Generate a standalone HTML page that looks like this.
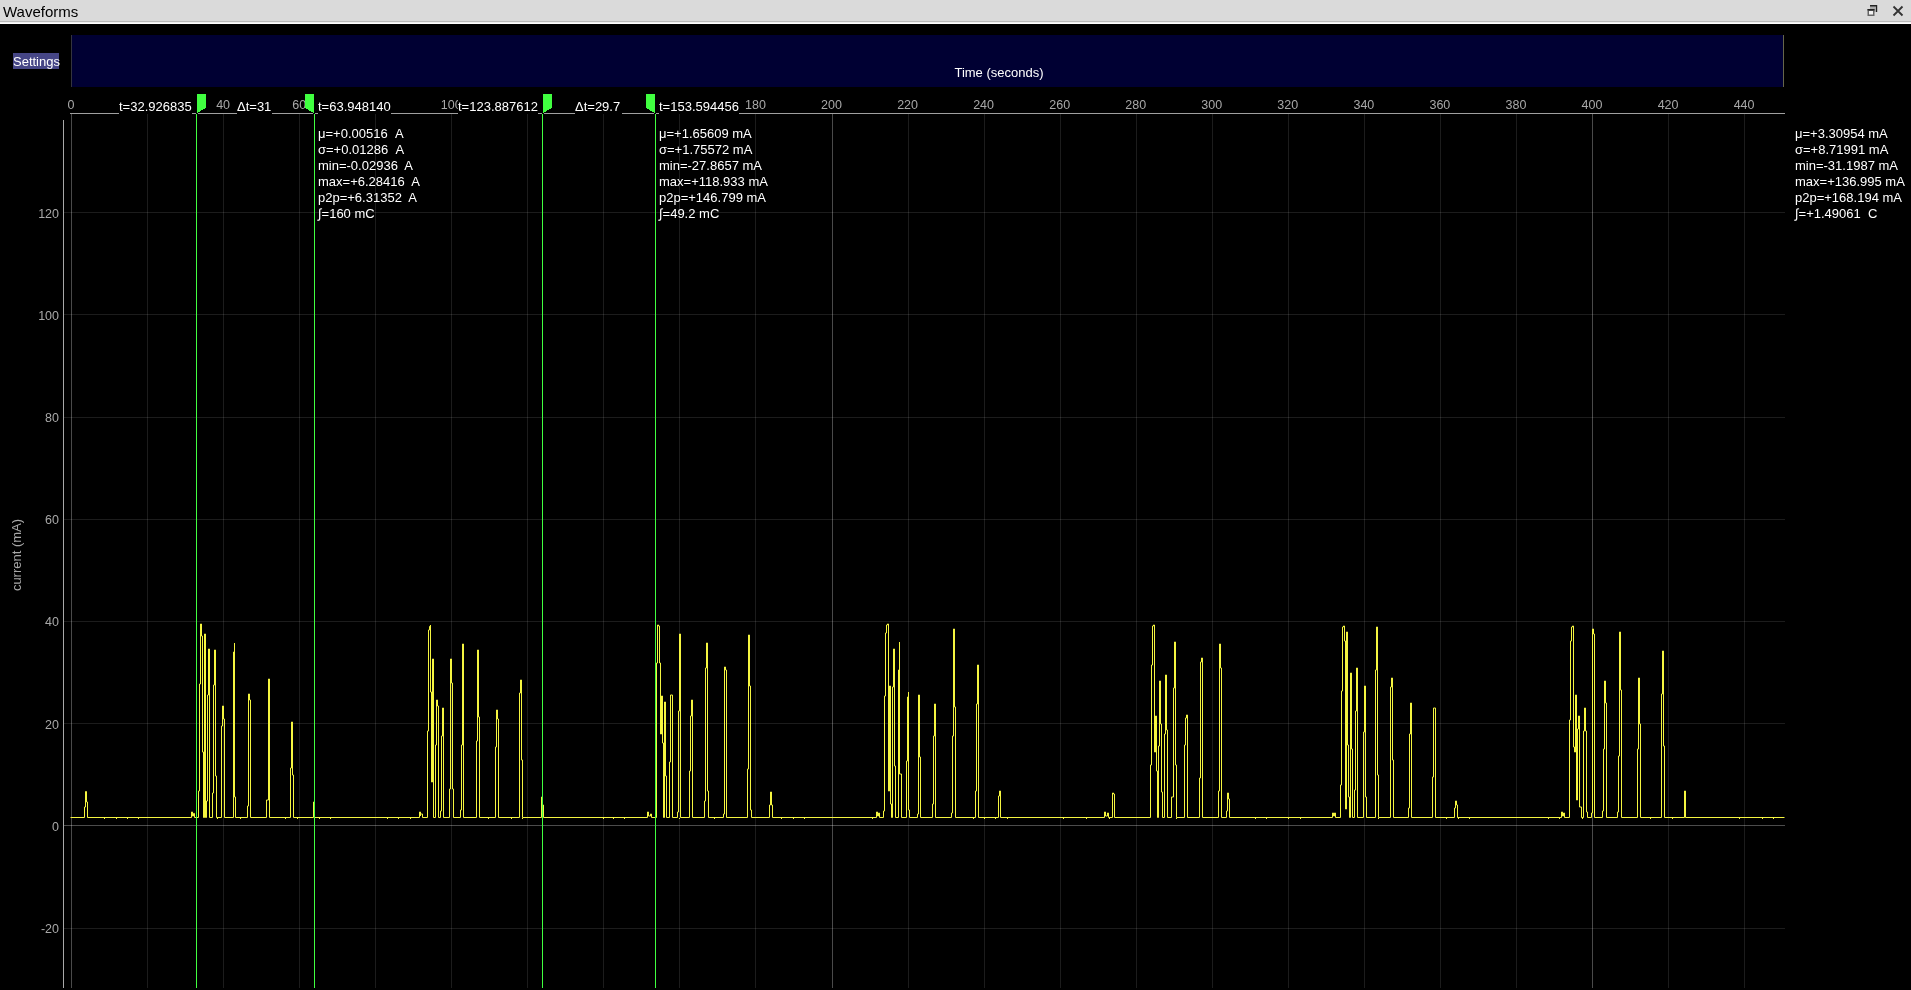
<!DOCTYPE html><html><head><meta charset="utf-8"><style>
html,body{margin:0;padding:0;background:#000;width:1911px;height:990px;overflow:hidden}
svg{position:absolute;left:0;top:0}
text{font-family:"Liberation Sans",sans-serif}
</style></head><body>
<svg width="1911" height="990" viewBox="0 0 1911 990">
<rect x="0" y="0" width="1911" height="21" fill="#dadada"/>
<rect x="0" y="21" width="1911" height="1" fill="#b9b9b9"/>
<rect x="0" y="22" width="1911" height="1" fill="#f0f0f0"/>
<rect x="0" y="23" width="1911" height="1" fill="#ffffff"/>
<text x="3" y="17" font-size="15" fill="#000">Waveforms</text>

<g>
<rect x="1870" y="5" width="7" height="7" fill="#aaa"/>
<rect x="1870" y="5" width="7" height="1.5" fill="#222"/>
<rect x="1876" y="5" width="1.2" height="7" fill="#222"/>
<rect x="1867.5" y="9" width="7" height="7" fill="#666"/>
<rect x="1867.5" y="9" width="7" height="1.5" fill="#222"/>
<rect x="1869" y="11" width="4" height="3.5" fill="#f2f2f2"/>
</g>
<path d="M1893.5 6.5 L1902.5 15.5 M1902.5 6.5 L1893.5 15.5" stroke="#333" stroke-width="1.8" fill="none"/>

<rect x="71" y="35" width="1713" height="52" fill="#000033"/>
<rect x="71" y="35" width="1" height="52" fill="#34343e"/>
<rect x="1783" y="35" width="1" height="52" fill="#66664a"/>
<text x="999" y="77" font-size="13" fill="#fff" text-anchor="middle">Time (seconds)</text>
<rect x="13" y="53" width="46" height="16" fill="#464686"/>
<text x="13" y="66" font-size="13" fill="#fff">Settings</text>
<rect x="71" y="114" width="1" height="874" fill="#4a4a4a"/>
<rect x="147" y="114" width="1" height="874" fill="#1c1c1c"/>
<rect x="223" y="114" width="1" height="874" fill="#1c1c1c"/>
<rect x="299" y="114" width="1" height="874" fill="#1c1c1c"/>
<rect x="375" y="114" width="1" height="874" fill="#1c1c1c"/>
<rect x="451" y="114" width="1" height="874" fill="#1c1c1c"/>
<rect x="527" y="114" width="1" height="874" fill="#1c1c1c"/>
<rect x="603" y="114" width="1" height="874" fill="#1c1c1c"/>
<rect x="679" y="114" width="1" height="874" fill="#1c1c1c"/>
<rect x="755" y="114" width="1" height="874" fill="#1c1c1c"/>
<rect x="832" y="114" width="1" height="874" fill="#4a4a4a"/>
<rect x="908" y="114" width="1" height="874" fill="#1c1c1c"/>
<rect x="984" y="114" width="1" height="874" fill="#1c1c1c"/>
<rect x="1060" y="114" width="1" height="874" fill="#1c1c1c"/>
<rect x="1136" y="114" width="1" height="874" fill="#1c1c1c"/>
<rect x="1212" y="114" width="1" height="874" fill="#1c1c1c"/>
<rect x="1288" y="114" width="1" height="874" fill="#1c1c1c"/>
<rect x="1364" y="114" width="1" height="874" fill="#1c1c1c"/>
<rect x="1440" y="114" width="1" height="874" fill="#1c1c1c"/>
<rect x="1516" y="114" width="1" height="874" fill="#1c1c1c"/>
<rect x="1592" y="114" width="1" height="874" fill="#4a4a4a"/>
<rect x="1668" y="114" width="1" height="874" fill="#1c1c1c"/>
<rect x="1744" y="114" width="1" height="874" fill="#1c1c1c"/>
<rect x="64" y="212" width="1721" height="1" fill="#1c1c1c" style="mix-blend-mode:screen"/>
<text x="59" y="218" font-size="12.5" fill="#a8a8a8" text-anchor="end">120</text>
<rect x="64" y="314" width="1721" height="1" fill="#1c1c1c" style="mix-blend-mode:screen"/>
<text x="59" y="320" font-size="12.5" fill="#a8a8a8" text-anchor="end">100</text>
<rect x="64" y="417" width="1721" height="1" fill="#1c1c1c" style="mix-blend-mode:screen"/>
<text x="59" y="422" font-size="12.5" fill="#a8a8a8" text-anchor="end">80</text>
<rect x="64" y="519" width="1721" height="1" fill="#1c1c1c" style="mix-blend-mode:screen"/>
<text x="59" y="524" font-size="12.5" fill="#a8a8a8" text-anchor="end">60</text>
<rect x="64" y="621" width="1721" height="1" fill="#1c1c1c" style="mix-blend-mode:screen"/>
<text x="59" y="626" font-size="12.5" fill="#a8a8a8" text-anchor="end">40</text>
<rect x="64" y="723" width="1721" height="1" fill="#1c1c1c" style="mix-blend-mode:screen"/>
<text x="59" y="729" font-size="12.5" fill="#a8a8a8" text-anchor="end">20</text>
<rect x="64" y="825" width="1721" height="1" fill="#4c4c4c" style="mix-blend-mode:screen"/>
<text x="59" y="831" font-size="12.5" fill="#a8a8a8" text-anchor="end">0</text>
<rect x="64" y="928" width="1721" height="1" fill="#1c1c1c" style="mix-blend-mode:screen"/>
<text x="59" y="933" font-size="12.5" fill="#a8a8a8" text-anchor="end">-20</text>
<rect x="70" y="113" width="1715" height="1" fill="#a0a0a0"/>
<rect x="63" y="120" width="1" height="868" fill="#a8a8a8"/>
<text x="71.0" y="109" font-size="12.5" fill="#a8a8a8" text-anchor="middle">0</text>
<text x="147.1" y="109" font-size="12.5" fill="#a8a8a8" text-anchor="middle">20</text>
<text x="223.1" y="109" font-size="12.5" fill="#a8a8a8" text-anchor="middle">40</text>
<text x="299.2" y="109" font-size="12.5" fill="#a8a8a8" text-anchor="middle">60</text>
<text x="375.2" y="109" font-size="12.5" fill="#a8a8a8" text-anchor="middle">80</text>
<text x="451.3" y="109" font-size="12.5" fill="#a8a8a8" text-anchor="middle">100</text>
<text x="527.3" y="109" font-size="12.5" fill="#a8a8a8" text-anchor="middle">120</text>
<text x="603.4" y="109" font-size="12.5" fill="#a8a8a8" text-anchor="middle">140</text>
<text x="679.4" y="109" font-size="12.5" fill="#a8a8a8" text-anchor="middle">160</text>
<text x="755.5" y="109" font-size="12.5" fill="#a8a8a8" text-anchor="middle">180</text>
<text x="831.5" y="109" font-size="12.5" fill="#a8a8a8" text-anchor="middle">200</text>
<text x="907.6" y="109" font-size="12.5" fill="#a8a8a8" text-anchor="middle">220</text>
<text x="983.6" y="109" font-size="12.5" fill="#a8a8a8" text-anchor="middle">240</text>
<text x="1059.7" y="109" font-size="12.5" fill="#a8a8a8" text-anchor="middle">260</text>
<text x="1135.7" y="109" font-size="12.5" fill="#a8a8a8" text-anchor="middle">280</text>
<text x="1211.8" y="109" font-size="12.5" fill="#a8a8a8" text-anchor="middle">300</text>
<text x="1287.8" y="109" font-size="12.5" fill="#a8a8a8" text-anchor="middle">320</text>
<text x="1363.9" y="109" font-size="12.5" fill="#a8a8a8" text-anchor="middle">340</text>
<text x="1439.9" y="109" font-size="12.5" fill="#a8a8a8" text-anchor="middle">360</text>
<text x="1516.0" y="109" font-size="12.5" fill="#a8a8a8" text-anchor="middle">380</text>
<text x="1592.0" y="109" font-size="12.5" fill="#a8a8a8" text-anchor="middle">400</text>
<text x="1668.1" y="109" font-size="12.5" fill="#a8a8a8" text-anchor="middle">420</text>
<text x="1744.1" y="109" font-size="12.5" fill="#a8a8a8" text-anchor="middle">440</text>
<text transform="translate(21,555) rotate(-90)" x="0" y="0" font-size="13" fill="#a8a8a8" text-anchor="middle">current (mA)</text>
<path d="M70.5 817.5H84.5V807H85.5V791.5H86.5V802H87.5V817.5H191.5V812H192.5V816H193.5V813.4H194.5V817.5H198.5V791H199.5V684H200.5V624H201.5V626H201.5V636H202.5V752H203.5V817.5H204.5V634H205.5V817.5H206.5V801H207.5V695H208.5V649H209.5V765H209.5V817.5H212.5V793H213.5V685H214.5V650H215.5V776H216.5V817.5H221.5V726H222.5V706H223.5V719H224.5V802H224.5V817.5H233.5V652H234.5V643H234.5V797H235.5V817.5H247.5V806H248.5V694H249.5V700H250.5V755H250.5V817.5H266.5V800H268.5V732H268.5V679H269.5V817.5H290.5V768H291.5V722H292.5V775H293.5V817.5H313.5V802H314.5V817.5H419.5V812H420.5V816H420.5V814H422.5V817.5H427.5V731H428.5V630H429.5V626.4H430.5V625H430.5V692H431.5V782H432.5V659H433.5V662H433.5V817.5H435.5V745H436.5V700H437.5V706H438.5V817.5H440.5V811H441.5V736H442.5V708H443.5V720H443.5V817.5H449.5V789H450.5V659H451.5V683H452.5V789H453.5V817.5H460.5V810H461.5V745H462.5V644H463.5V699H463.5V817.5H476.5V741H477.5V650H478.5V717H479.5V804H479.5V817.5H495.5V747H496.5V710H497.5V719H498.5V788H498.5V817.5H519.5V693H520.5V680H521.5V760H522.5V817.5H541.5V797H542.5V805H543.5V817.5H647.5V812H648.5V816H650.5V814H651.5V817.5H656.5V663H657.5V625H658.5V626H659.5V663H660.5V734H661.5V696H662.5V743H663.5V817.5H664.5V702H665.5V776H666.5V817.5H669.5V762H670.5V695H672.5V784H672.5V817.5H677.5V812H678.5V711H679.5V634H680.5V739H680.5V817.5H689.5V771H690.5V716H691.5V700H692.5V782H692.5V817.5H704.5V801H705.5V668H706.5V643H707.5V791H708.5V817.5H723.5V814H724.5V667H725.5V670H726.5V776H726.5V817.5H747.5V769H748.5V635H749.5V686H750.5V810H751.5V817.5H769.5V805H770.5V792H771.5V805H772.5V817.5H876.5V812H877.5V816H878.5V813H879.5V817.5H883.5V811H884.5V696H885.5V633H886.5V625H887.5V624H888.5V791H889.5V686H890.5V804H891.5V817.5H892.5V687H893.5V649H894.5V766H895.5V812H895.5V817.5H898.5V670H899.5V642H899.5V774H901.5V812H901.5V817.5H906.5V761H907.5V697H908.5V692H908.5V810H909.5V817.5H917.5V814H918.5V695H919.5V698H919.5V757H920.5V817.5H932.5V804H933.5V736H934.5V704H935.5V727H935.5V817.5H951.5V813H952.5V736H953.5V629H954.5V707H955.5V817.5H975.5V791H976.5V704H977.5V665H978.5V765H978.5V817.5H998.5V796H999.5V791H1000.5V817.5H1104.5V812H1105.5V816H1107.5V813H1108.5V817.5H1112.5V793H1113.5V794H1114.5V817.5H1150.5V765H1151.5V665H1152.5V626H1153.5V625H1154.5V686H1154.5V752H1155.5V716H1156.5V771H1157.5V817.5H1158.5V746H1159.5V681H1160.5V724H1161.5V792H1162.5V817.5H1164.5V734H1165.5V675H1166.5V730H1167.5V798H1167.5V817.5H1171.5V797H1173.5V688H1174.5V642H1175.5V765H1176.5V817.5H1184.5V745H1185.5V718H1186.5V715H1187.5V800H1187.5V817.5H1199.5V778H1200.5V662H1201.5V658H1202.5V817.5H1218.5V791H1219.5V644H1220.5V668H1221.5V800H1221.5V817.5H1226.5V811H1227.5V793H1228.5V799H1229.5V817.5H1332.5V813H1333.5V816H1334.5V813H1335.5V817.5H1340.5V785H1341.5V691H1342.5V627H1343.5V626H1344.5V641H1345.5V809H1346.5V632H1347.5V745H1348.5V797H1349.5V817.5H1350.5V673H1351.5V749H1352.5V817.5H1354.5V790H1355.5V711H1356.5V668H1357.5V756H1357.5V817.5H1363.5V732H1364.5V686H1365.5V797H1366.5V817.5H1375.5V670H1376.5V627H1377.5V775H1378.5V817.5H1390.5V687H1391.5V678H1392.5V760H1393.5V817.5H1408.5V808H1409.5V734H1410.5V703H1411.5V817.5H1432.5V777H1433.5V708H1435.5V770H1435.5V817.5H1454.5V808H1455.5V801H1456.5V805H1457.5V817.5H1561.5V812H1562.5V816H1563.5V813H1564.5V817.5H1569.5V720H1570.5V641H1571.5V627H1572.5V626H1573.5V747H1574.5V752H1575.5V695H1576.5V800H1577.5V729H1578.5V716H1579.5V807H1581.5V817.5H1583.5V731H1584.5V708H1585.5V731H1586.5V812H1587.5V817.5H1591.5V813H1592.5V629H1593.5V634H1594.5V813H1594.5V817.5H1602.5V811H1603.5V749H1604.5V681H1605.5V703H1606.5V817.5H1617.5V812H1618.5V756H1619.5V632H1620.5V690H1621.5V817.5H1637.5V749H1638.5V678H1639.5V724H1640.5V794H1640.5V817.5H1661.5V694H1662.5V651H1663.5V746H1664.5V808H1664.5V817.5H1684.5V791H1685.5V793H1685.5V817.5H1784.5" stroke="#f5f540" stroke-width="1" fill="none" />
<g fill="#f5f540"><rect x="104" y="818" width="1" height="1"/><rect x="116" y="818" width="1" height="1"/><rect x="127" y="818" width="1" height="1"/><rect x="138" y="818" width="1" height="1"/><rect x="217" y="818" width="1" height="1"/><rect x="240" y="818" width="1" height="1"/><rect x="285" y="818" width="1" height="1"/><rect x="297" y="818" width="1" height="1"/><rect x="319" y="818" width="1" height="1"/><rect x="330" y="818" width="1" height="1"/><rect x="387" y="818" width="1" height="1"/><rect x="398" y="818" width="1" height="1"/><rect x="410" y="818" width="1" height="1"/><rect x="488" y="818" width="1" height="1"/><rect x="511" y="818" width="1" height="1"/><rect x="522" y="818" width="1" height="1"/><rect x="603" y="818" width="1" height="1"/><rect x="613" y="818" width="1" height="1"/><rect x="624" y="818" width="1" height="1"/><rect x="679" y="818" width="1" height="1"/><rect x="714" y="818" width="1" height="1"/><rect x="781" y="818" width="1" height="1"/><rect x="793" y="818" width="1" height="1"/><rect x="804" y="818" width="1" height="1"/><rect x="872" y="818" width="1" height="1"/><rect x="973" y="818" width="1" height="1"/><rect x="984" y="818" width="1" height="1"/><rect x="995" y="818" width="1" height="1"/><rect x="1007" y="818" width="1" height="1"/><rect x="1063" y="818" width="1" height="1"/><rect x="1086" y="818" width="1" height="1"/><rect x="1109" y="818" width="1" height="1"/><rect x="1176" y="818" width="1" height="1"/><rect x="1255" y="818" width="1" height="1"/><rect x="1266" y="818" width="1" height="1"/><rect x="1288" y="818" width="1" height="1"/><rect x="1300" y="818" width="1" height="1"/><rect x="1378" y="818" width="1" height="1"/><rect x="1446" y="818" width="1" height="1"/><rect x="1458" y="818" width="1" height="1"/><rect x="1469" y="818" width="1" height="1"/><rect x="1548" y="818" width="1" height="1"/><rect x="1559" y="818" width="1" height="1"/><rect x="1582" y="818" width="1" height="1"/><rect x="1650" y="818" width="1" height="1"/><rect x="1672" y="818" width="1" height="1"/><rect x="1739" y="818" width="1" height="1"/><rect x="1762" y="818" width="1" height="1"/><rect x="1773" y="818" width="1" height="1"/></g>
<rect x="196" y="114" width="1" height="874" fill="#40ff40"/>
<polygon shape-rendering="crispEdges" points="197,94 206,94 206,108 197,113" fill="#40ff40"/>
<rect x="196" y="113" width="2" height="1" fill="#000"/>
<rect x="314" y="114" width="1" height="874" fill="#40ff40"/>
<polygon shape-rendering="crispEdges" points="305,94 314,94 314,113 305,108" fill="#40ff40"/>
<rect x="313" y="113" width="2" height="1" fill="#000"/>
<rect x="542" y="114" width="1" height="874" fill="#40ff40"/>
<polygon shape-rendering="crispEdges" points="543,94 552,94 552,108 543,113" fill="#40ff40"/>
<rect x="542" y="113" width="2" height="1" fill="#000"/>
<rect x="655" y="114" width="1" height="874" fill="#40ff40"/>
<polygon shape-rendering="crispEdges" points="646,94 655,94 655,113 646,108" fill="#40ff40"/>
<rect x="654" y="113" width="2" height="1" fill="#000"/>
<rect x="119" y="100" width="73" height="14" fill="#000"/>
<text x="119" y="111" font-size="13" fill="#fff">t=32.926835</text>
<rect x="237" y="100" width="35" height="14" fill="#000"/>
<text x="237" y="111" font-size="13" fill="#fff">Δt=31</text>
<rect x="318" y="100" width="73" height="14" fill="#000"/>
<text x="318" y="111" font-size="13" fill="#fff">t=63.948140</text>
<rect x="458" y="100" width="80" height="14" fill="#000"/>
<text x="458" y="111" font-size="13" fill="#fff">t=123.887612</text>
<rect x="575" y="100" width="47" height="14" fill="#000"/>
<text x="575" y="111" font-size="13" fill="#fff">Δt=29.7</text>
<rect x="659" y="100" width="80" height="14" fill="#000"/>
<text x="659" y="111" font-size="13" fill="#fff">t=153.594456</text>
<text x="318" y="138" font-size="13" fill="#fff" xml:space="preserve">μ=+0.00516  A</text>
<text x="318" y="154" font-size="13" fill="#fff" xml:space="preserve">σ=+0.01286  A</text>
<text x="318" y="170" font-size="13" fill="#fff" xml:space="preserve">min=-0.02936  A</text>
<text x="318" y="186" font-size="13" fill="#fff" xml:space="preserve">max=+6.28416  A</text>
<text x="318" y="202" font-size="13" fill="#fff" xml:space="preserve">p2p=+6.31352  A</text>
<text x="318" y="218" font-size="13" fill="#fff" xml:space="preserve">∫=160 mC</text>
<text x="659" y="138" font-size="13" fill="#fff" xml:space="preserve">μ=+1.65609 mA</text>
<text x="659" y="154" font-size="13" fill="#fff" xml:space="preserve">σ=+1.75572 mA</text>
<text x="659" y="170" font-size="13" fill="#fff" xml:space="preserve">min=-27.8657 mA</text>
<text x="659" y="186" font-size="13" fill="#fff" xml:space="preserve">max=+118.933 mA</text>
<text x="659" y="202" font-size="13" fill="#fff" xml:space="preserve">p2p=+146.799 mA</text>
<text x="659" y="218" font-size="13" fill="#fff" xml:space="preserve">∫=49.2 mC</text>
<text x="1795" y="138" font-size="13" fill="#fff" xml:space="preserve">μ=+3.30954 mA</text>
<text x="1795" y="154" font-size="13" fill="#fff" xml:space="preserve">σ=+8.71991 mA</text>
<text x="1795" y="170" font-size="13" fill="#fff" xml:space="preserve">min=-31.1987 mA</text>
<text x="1795" y="186" font-size="13" fill="#fff" xml:space="preserve">max=+136.995 mA</text>
<text x="1795" y="202" font-size="13" fill="#fff" xml:space="preserve">p2p=+168.194 mA</text>
<text x="1795" y="218" font-size="13" fill="#fff" xml:space="preserve">∫=+1.49061  C</text>
</svg></body></html>
